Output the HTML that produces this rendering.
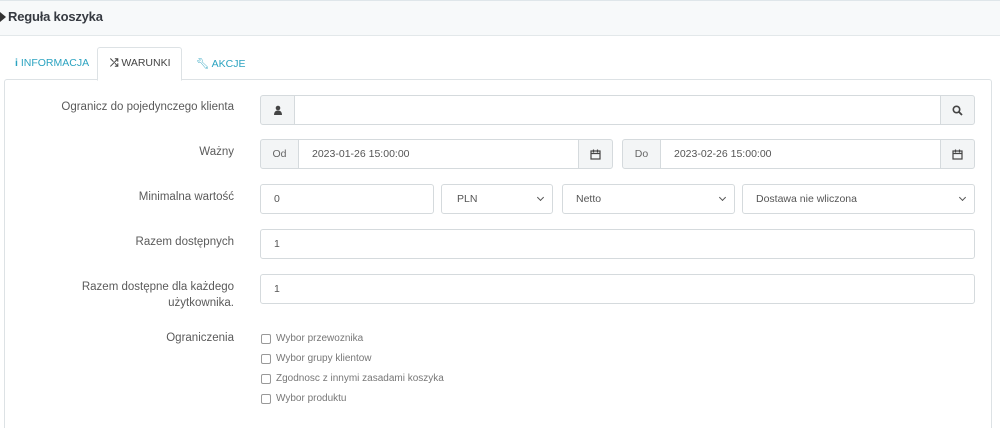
<!DOCTYPE html><html><head><meta charset="utf-8"><style>
html,body{margin:0;width:1000px;height:428px;overflow:hidden}
body{background:#fff;font-family:"Liberation Sans",sans-serif;color:#555;font-size:11px;position:relative}
.a{position:absolute;box-sizing:border-box}
.hdr{left:0;top:0;width:1000px;height:36px;background:#f7f9fa;border-bottom:1px solid #e3e8ea;border-top:1px solid #dfe6ea}
.inp{border:1px solid #d5dadd;background:#fff;border-radius:3px;padding-left:13px;line-height:28px;height:30px;color:#555;font-size:10.5px}
.add{background:#f3f5f6;border:1px solid #d5dadd;height:30px;line-height:28px;text-align:center;color:#666;font-size:10.5px}
.lbl{right:766px;text-align:right;color:#5a5a5a;font-size:11.5px}
.cb{width:10px;height:10px;border:1px solid #999;border-radius:2px;left:261px}
.ct{left:276px;font-size:10px;color:#777}
.chev{position:absolute;right:9px;top:10px;width:4px;height:4px;border-right:1.5px solid #555;border-bottom:1.5px solid #555;transform:rotate(45deg)}
</style></head><body>
<div class="a hdr"></div>
<div class="a" style="left:0;top:12px;width:0;height:0;border-left:6px solid #333;border-top:5px solid transparent;border-bottom:5px solid transparent"></div>
<div class="a" style="left:8px;top:9px;font-size:13px;color:#363a41;font-weight:bold;letter-spacing:-.2px">Reguła koszyka</div>
<div class="a" style="left:4px;top:79px;width:988px;height:349px;border:1px solid #dde2e5;border-bottom:none;border-radius:3px 3px 0 0"></div>
<div class="a" style="left:97px;top:47px;width:85px;height:34px;border:1px solid #dde2e5;border-bottom:1px solid #fff;background:#fff;border-radius:3px 3px 0 0"></div>
<div class="a" style="left:15px;top:57px;color:#2ba3c0;font-size:10.5px"><b>i</b> INFORMACJA</div>
<div class="a" style="left:110px;top:57px;color:#444;font-size:10.5px"><b>⤮</b> WARUNKI</div>
<div class="a" style="left:196px;top:57px;color:#2ba3c0;font-size:10.5px">🔧︎ AKCJE</div>

<div class="a lbl" style="top:101px">Ogranicz do pojedynczego klienta</div>
<div class="a add" style="left:260px;top:95px;width:35px;border-radius:3px 0 0 3px">
<svg width="10" height="10" viewBox="0 0 10 10" style="margin-top:9px"><circle cx="5" cy="3" r="2.3" fill="#444"/><path d="M1 10 Q1 5.5 5 5.5 Q9 5.5 9 10Z" fill="#444"/></svg></div>
<div class="a inp" style="left:294px;top:95px;width:647px;border-radius:0"></div>
<div class="a add" style="left:940px;top:95px;width:35px;border-radius:0 3px 3px 0"><svg width="11" height="11" viewBox="0 0 11 11" style="margin-top:9px"><circle cx="4.5" cy="4.5" r="3.2" fill="none" stroke="#444" stroke-width="1.6"/><path d="M7 7l3 3" stroke="#444" stroke-width="1.8"/></svg></div>

<div class="a lbl" style="top:146px">Ważny</div>
<div class="a add" style="left:260px;top:139px;width:39px;border-radius:3px 0 0 3px">Od</div>
<div class="a inp" style="left:298px;top:139px;width:281px;border-radius:0">2023-01-26 15:00:00</div>
<div class="a add" style="left:578px;top:139px;width:35px;border-radius:0 3px 3px 0"><svg width="11" height="11" viewBox="0 0 11 11" style="margin-top:9px"><rect x="1" y="2" width="9" height="8" fill="none" stroke="#444" stroke-width="1.2"/><path d="M1 4.5h9M3.5 0.5v3M7.5 0.5v3" stroke="#444" stroke-width="1.2"/></svg></div>
<div class="a add" style="left:622px;top:139px;width:39px;border-radius:3px 0 0 3px">Do</div>
<div class="a inp" style="left:660px;top:139px;width:281px;border-radius:0">2023-02-26 15:00:00</div>
<div class="a add" style="left:940px;top:139px;width:35px;border-radius:0 3px 3px 0"><svg width="11" height="11" viewBox="0 0 11 11" style="margin-top:9px"><rect x="1" y="2" width="9" height="8" fill="none" stroke="#444" stroke-width="1.2"/><path d="M1 4.5h9M3.5 0.5v3M7.5 0.5v3" stroke="#444" stroke-width="1.2"/></svg></div>

<div class="a lbl" style="top:191px">Minimalna wartość</div>
<div class="a inp" style="left:260px;top:184px;width:174px">0</div>
<div class="a inp" style="left:441px;top:184px;width:112px;padding-left:15px">PLN<span class="chev"></span></div>
<div class="a inp" style="left:562px;top:184px;width:173px">Netto<span class="chev"></span></div>
<div class="a inp" style="left:742px;top:184px;width:233px">Dostawa nie wliczona<span class="chev"></span></div>

<div class="a lbl" style="top:236px">Razem dostępnych</div>
<div class="a inp" style="left:260px;top:229px;width:715px">1</div>

<div class="a lbl" style="top:279px;line-height:16px">Razem dostępne dla każdego<br>użytkownika.</div>
<div class="a inp" style="left:260px;top:274px;width:715px">1</div>

<div class="a lbl" style="top:332px">Ograniczenia</div>
<div class="a cb" style="top:334px"></div><div class="a ct" style="top:333px">Wybor przewoznika</div>
<div class="a cb" style="top:354px"></div><div class="a ct" style="top:353px">Wybor grupy klientow</div>
<div class="a cb" style="top:374px"></div><div class="a ct" style="top:373px">Zgodnosc z innymi zasadami koszyka</div>
<div class="a cb" style="top:394px"></div><div class="a ct" style="top:393px">Wybor produktu</div>
</body></html>
